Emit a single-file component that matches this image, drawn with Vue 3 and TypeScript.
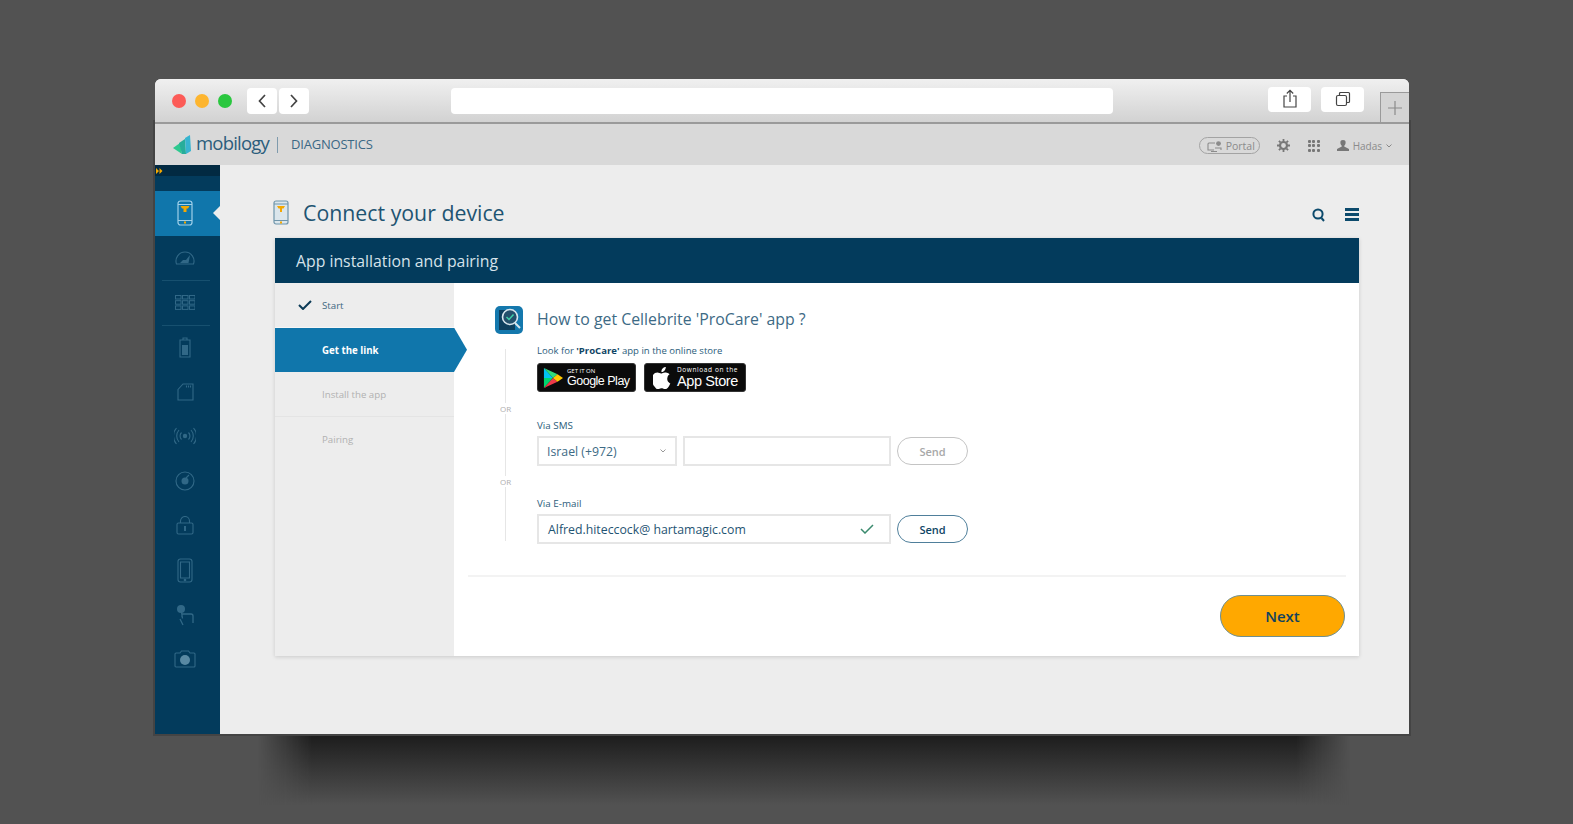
<script setup lang="ts">
interface Step {
  label: string
  state: 'done' | 'active' | 'todo'
}

const steps: Step[] = [
  { label: 'Start', state: 'done' },
  { label: 'Get the link', state: 'active' },
  { label: 'Install the app', state: 'todo' },
  { label: 'Pairing', state: 'todo' },
]
</script>

<template>
  <div class="stage">
    <div class="shadow"></div>
    <div class="edge"></div>
    <div class="window">
      <!-- browser chrome -->
      <div class="chrome">
        <div class="lights">
          <span class="light red"></span>
          <span class="light yellow"></span>
          <span class="light green"></span>
        </div>
        <div class="navs">
          <button class="chrome-btn nav">
            <svg width="10" height="16" viewBox="0 0 10 16"><path d="M8 2 2.5 8 8 14" fill="none" stroke="#444" stroke-width="1.7" /></svg>
          </button>
          <button class="chrome-btn nav">
            <svg width="10" height="16" viewBox="0 0 10 16"><path d="M2 2l5.5 6L2 14" fill="none" stroke="#444" stroke-width="1.7" /></svg>
          </button>
        </div>
        <div class="address"></div>
        <button class="chrome-btn tool share">
          <svg width="16" height="20" viewBox="0 0 16 20" fill="none" stroke="#444" stroke-width="1.2">
            <path d="M5 7H2v11h12V7h-3M8 13V1.5M4.8 4.5 8 1.3l3.2 3.2" />
          </svg>
        </button>
        <button class="chrome-btn tool tabs">
          <svg width="16" height="16" viewBox="0 0 16 16" fill="none" stroke="#444" stroke-width="1.2">
            <rect x="1.5" y="4.5" width="10" height="10" rx="1.5" />
            <path d="M4.5 4.5v-2a1 1 0 0 1 1-1h8a1 1 0 0 1 1 1v8a1 1 0 0 1-1 1h-2" />
          </svg>
        </button>
        <div class="new-tab">
          <svg width="14" height="14" viewBox="0 0 14 14"><path d="M7 0v14M0 7h14" stroke="#8a8a8a" stroke-width="1.2" /></svg>
        </div>
      </div>

      <!-- app header -->
      <header class="app-header">
        <svg class="logo-mark" width="19" height="20" viewBox="0 0 19 20">
          <path d="M0 13 7 8l2 11Z" fill="#2ec98f" />
          <path d="M6 8l6-4 1 15-4 0Z" fill="#27ad9a" />
          <path d="M12 3l5-3 1 16-5 3Z" fill="#37b4d0" />
        </svg>
        <span class="logo-text">mobilogy</span>
        <span class="logo-sep"></span>
        <span class="logo-sub">DIAGNOSTICS</span>
        <div class="header-right">
          <span class="portal">
            <svg width="16" height="12" viewBox="0 0 16 12" fill="none" stroke="#8b8b8b" stroke-width="1.1">
              <path d="M8 3H2a1 1 0 0 0-1 1v6h6M4 11.500h6" />
              <circle cx="11.5" cy="3.6" r="2.4" fill="#8b8b8b" stroke="none" />
              <path d="M8 8h6v2" />
            </svg>
            Portal
          </span>
          <svg class="gear" width="13" height="13" viewBox="0 0 13 13">
            <circle cx="6.5" cy="6.5" r="3.5" fill="none" stroke="#777" stroke-width="2.2" />
            <path d="M6.5 0v13M0 6.5h13M1.9 1.9l9.2 9.2M11.1 1.9l-9.2 9.2" stroke="#777" stroke-width="1.8" stroke-dasharray="2.2 8.6 2.2" />
          </svg>
          <div class="apps">
            <i v-for="n in 9" :key="n"></i>
          </div>
          <span class="user">
            <svg width="12" height="11" viewBox="0 0 12 11"><path d="M6 0a2.6 2.6 0 0 1 2.6 2.8c0 1.3-.7 2.4-1.4 2.9v.8L12 9v2H0V9l4.800-2.500v-.8C4.100 5.200 3.400 4.100 3.400 2.800A2.600 2.600 0 0 1 6 0Z" fill="#777" /></svg>
            Hadas
            <svg width="6" height="4" viewBox="0 0 6 4"><path d="M.5.500 3 3 5.500.5" fill="none" stroke="#888" stroke-width="1" /></svg>
          </span>
        </div>
      </header>

      <div class="body">
        <aside class="sidebar">
          <div class="side-top">
            <svg width="7" height="6" viewBox="0 0 7 6"><path d="M0 0l3 3-3 3ZM3.500 0l3 3-3 3Z" fill="#f5a800" /></svg>
          </div>
          <div class="side-item active">
            <svg width="16" height="26" viewBox="0 0 16 26" fill="none" stroke="#9fd0ea" stroke-width="1.200">
              <rect x="1" y="1" width="14" height="24" rx="2.500" />
              <path d="M1 4.500h14M1 20.500h14" />
              <path d="M3.500 6h9l-1.500 2.500H9.500V12h-3V8.500H5Z" fill="#f5a800" stroke="none" />
              <rect x="7" y="21.500" width="2" height="2" fill="#f5a800" stroke="none" />
            </svg>
          </div>
          <div class="side-item rule">
            <svg width="20" height="14" viewBox="0 0 20 14" fill="none" stroke="#3d7492" stroke-width="1.100">
              <path d="M1.500 13A9 9 0 1 1 18.500 13Z" />
              <path d="M5 12l3-3h3l4-5-1.500 8Z" fill="#3d7492" stroke="none" />
            </svg>
          </div>
          <div class="side-item rule">
            <svg width="20" height="15" viewBox="0 0 20 15" fill="none" stroke="#3d7492" stroke-width="1">
              <g v-for="r in 3" :key="r">
                <rect v-for="c in 3" :key="c" :x="0.5 + (c - 1) * 7" :y="0.5 + (r - 1) * 5.200" width="5.500" height="3.500" />
              </g>
            </svg>
          </div>
          <div class="side-item">
            <svg width="12" height="21" viewBox="0 0 12 21" fill="none" stroke="#3d7492" stroke-width="1.100">
              <path d="M4 3V1h4v2M1 3h10v17H1Z" />
              <rect x="3" y="8" width="6" height="10" fill="#3d7492" stroke="none" />
            </svg>
          </div>
          <div class="side-item">
            <svg width="17" height="18" viewBox="0 0 17 18" fill="none" stroke="#3d7492" stroke-width="1.100">
              <path d="M1 6.500 6 1h10v16H1Z" />
              <path d="M9.500 2.500v2M11.500 2.500v2M13.500 2.500v2" />
            </svg>
          </div>
          <div class="side-item">
            <svg width="22" height="18" viewBox="0 0 22 18" fill="none" stroke="#3d7492" stroke-width="1.100">
              <circle cx="11" cy="9" r="2.200" fill="#3d7492" stroke="none" />
              <path d="M7.500 5.500a5 5 0 0 0 0 7M14.500 5.500a5 5 0 0 1 0 7M5 3a9 9 0 0 0 0 12M17 3a9 9 0 0 1 0 12M2.500 1a12 12 0 0 0 0 16M19.500 1a12 12 0 0 1 0 16" />
            </svg>
          </div>
          <div class="side-item">
            <svg width="20" height="20" viewBox="0 0 20 20" fill="none" stroke="#3d7492" stroke-width="1.100">
              <circle cx="10" cy="10" r="9" />
              <circle cx="10" cy="10" r="3.500" fill="#3d7492" stroke="none" />
              <path d="M11 7l3-3" />
            </svg>
          </div>
          <div class="side-item">
            <svg width="18" height="19" viewBox="0 0 18 19" fill="none" stroke="#3d7492" stroke-width="1.100">
              <path d="M4.500 7V5a4.500 4.500 0 0 1 9 0v2" />
              <rect x="1" y="7" width="16" height="11" rx="1.500" />
              <path d="M9 10v5" stroke-width="2" />
            </svg>
          </div>
          <div class="side-item">
            <svg width="16" height="25" viewBox="0 0 16 25" fill="none" stroke="#3d7492" stroke-width="1.100">
              <rect x="1" y="1" width="14" height="23" rx="2.500" />
              <path d="M3.500 4h9v16h-9Z" />
              <circle cx="8" cy="22" r=".8" fill="#3d7492" />
            </svg>
          </div>
          <div class="side-item">
            <svg width="18" height="22" viewBox="0 0 18 22" fill="none" stroke="#3d7492" stroke-width="1.300">
              <circle cx="5" cy="5" r="4" fill="#3d7492" stroke="none" />
              <path d="M5 5l1.500 9.500M6 13V10h9a2 2 0 0 1 2 2v7M4 15l3 6" />
            </svg>
          </div>
          <div class="side-item">
            <svg width="22" height="18" viewBox="0 0 22 18" fill="none" stroke="#3d7492" stroke-width="1.100">
              <path d="M2 3h4l1.500-2h7L16 3h4a1 1 0 0 1 1 1v12a1 1 0 0 1-1 1H2a1 1 0 0 1-1-1V4a1 1 0 0 1 1-1Z" />
              <circle cx="11" cy="10" r="5" fill="#6f9db5" stroke="none" />
            </svg>
          </div>
        </aside>

        <main class="main">
          <div class="title-row">
            <svg class="title-icon" width="16" height="25" viewBox="0 0 16 25" fill="none" stroke="#6f95ab" stroke-width="1.200">
              <rect x="1" y="1" width="14" height="23" rx="2" fill="#dbe6ec" />
              <path d="M1 4h14M1 20.500h14" />
              <path d="M4 6h8l-1.500 2.500H9V12H7V8.500H5.500Z" fill="#f5a800" stroke="none" />
              <rect x="7" y="21.500" width="2" height="2" fill="#f5a800" stroke="none" />
            </svg>
            <h1>Connect your device</h1>
            <svg class="search" width="13" height="14" viewBox="0 0 13 14" fill="none" stroke="#0c4a6c" stroke-width="2">
              <circle cx="6" cy="6" r="4.600" />
              <path d="M9.500 10l2.500 3" />
            </svg>
            <div class="burger"><i></i><i></i><i></i></div>
          </div>

          <section class="card">
            <div class="card-head">App installation and pairing</div>
            <div class="card-body">
              <nav class="steps">
                <div v-for="s in steps" :key="s.label" class="step" :class="s.state">
                  <svg v-if="s.state === 'done'" class="check" width="14" height="10" viewBox="0 0 14 10"><path d="M1 5l4 4 8-8" fill="none" stroke="#0c3b57" stroke-width="2" /></svg>
                  {{ s.label }}
                </div>
              </nav>

              <div class="content">
                <div class="how">
                  <svg class="app-icon" width="28" height="28" viewBox="0 0 28 28">
                    <rect width="28" height="28" rx="5" fill="#1478ad" />
                    <rect x="4" y="4" width="16" height="20" fill="#0d3f5e" />
                    <circle cx="15" cy="11" r="7.500" fill="#24506c" stroke="#d9e6ee" stroke-width="1.600" />
                    <path d="M11.500 11l2.500 2.500 4.500-5" fill="none" stroke="#3fd0a8" stroke-width="1.500" />
                    <path d="M20 17l5 5" stroke="#d9e6ee" stroke-width="2" />
                  </svg>
                  <h2>How to get Cellebrite 'ProCare' app ?</h2>
                </div>

                <div class="options">
                  <div class="rail">
                    <span class="rail-line first"></span>
                    <span class="or">OR</span>
                    <span class="rail-line second"></span>
                    <span class="or">OR</span>
                    <span class="rail-line third"></span>
                  </div>
                  <div class="fields">
                    <p class="hint">Look for <b>'ProCare'</b> app in the online store</p>
                    <div class="stores">
                      <div class="badge play">
                        <svg width="20" height="22" viewBox="0 0 22 24">
                          <path d="M1 1v11h10Z" fill="#00c3f3" />
                          <path d="M1 23V12h10Z" fill="#00d66f" />
                          <path d="M1 1l15 7-5 4Z" fill="#2fdc7b" />
                          <path d="M1 23l15-7-5-4Z" fill="#ef3b49" />
                          <path d="M16 8l6 4-6 4-5-4Z" fill="#ffc900" />
                        </svg>
                        <div class="badge-text">
                          <small>GET IT ON</small>
                          <strong>Google Play</strong>
                        </div>
                      </div>
                      <div class="badge apple">
                        <svg width="19" height="22" viewBox="0 0 170 200">
                          <path fill="#fff" d="M150 67c-1 1-22 13-22 39 0 31 27 42 28 42 0 1-4 15-14 29-9 13-18 25-32 25s-18-8-34-8c-15 0-21 8-34 8s-22-12-32-26C-2 160-11 134-11 110c0-39 25-59 50-59 13 0 24 9 33 9 8 0 21-10 36-10 6 0 27 1 42 17ZM104 31c6-7 11-18 11-28 0-1 0-3-1-4-10 1-21 7-28 15-6 6-11 17-11 28 0 1 0 3 1 3s2 0 3 0c9 0 20-6 25-14Z" />
                        </svg>
                        <div class="badge-text">
                          <small class="apple-small">Download on the</small>
                          <strong class="apple-name">App Store</strong>
                        </div>
                      </div>
                    </div>

                    <label class="field-label sms">Via SMS</label>
                    <div class="field-row">
                      <div class="box country">
                        Israel (+972)
                        <svg width="6" height="4" viewBox="0 0 6 4"><path d="M.5.500 3 3 5.500.5" fill="none" stroke="#999" stroke-width="1" /></svg>
                      </div>
                      <div class="box phone"></div>
                      <button class="send off">Send</button>
                    </div>

                    <label class="field-label mail">Via E-mail</label>
                    <div class="field-row">
                      <div class="box email">
                        Alfred.hiteccock@ hartamagic.com
                        <svg width="14" height="10" viewBox="0 0 14 10"><path d="M1 5l4 4 8-8" fill="none" stroke="#3b8a6e" stroke-width="1.500" /></svg>
                      </div>
                      <button class="send on">Send</button>
                    </div>
                  </div>
                </div>

                <div class="footer">
                  <button class="next">Next</button>
                </div>
              </div>
            </div>
          </section>
        </main>
      </div>
    </div>
  </div>
</template>

<style>
html,
body {
  margin: 0;
  background: #525252;
}
</style>

<style scoped>
.stage {
  position: relative;
  width: 1573px;
  height: 824px;
  padding: 79px 0 0 155px;
  box-sizing: border-box;
  overflow: hidden;
  background: #525252;
  font-family: "Open Sans", "Liberation Sans", sans-serif;
}

.shadow {
  position: absolute;
  left: 258px;
  top: 733px;
  width: 1092px;
  height: 72px;
  background: linear-gradient(#1b1b1b, #525252);
  -webkit-mask-image: linear-gradient(90deg, transparent, #000 5%, #000 95%, transparent);
  mask-image: linear-gradient(90deg, transparent, #000 5%, #000 95%, transparent);
}

.edge {
  position: absolute;
  left: 153px;
  top: 120px;
  width: 1258px;
  height: 616px;
  background: #444444;
}

.window {
  position: relative;
  width: 1254px;
  height: 655px;
  display: flex;
  flex-direction: column;
  border-radius: 6px 6px 0 0;
  overflow: hidden;
  background: #ededed;
}

button {
  font-family: inherit;
  border: none;
  padding: 0;
}

.chrome {
  height: 45px;
  flex: none;
  display: flex;
  align-items: center;
  box-sizing: border-box;
  border-bottom: 2px solid #9a9a9a;
  background: linear-gradient(#f0f0f0, #d2d2d2);
  position: relative;
}

.lights {
  display: flex;
  gap: 9px;
  margin-left: 17px;
}

.light {
  width: 14px;
  height: 14px;
  border-radius: 50%;
}

.red { background: #fc5b57; }
.yellow { background: #fdb52f; }
.green { background: #2ac73f; }

.navs {
  display: flex;
  gap: 2px;
  margin-left: 15px;
}

.chrome-btn {
  display: flex;
  align-items: center;
  justify-content: center;
  background: #fff;
  border-radius: 4px;
  height: 26px;
}

.nav { width: 30px; }

.address {
  width: 662px;
  height: 26px;
  margin-left: 142px;
  background: #fff;
  border-radius: 4px;
}

.tool {
  width: 43px;
  height: 25px;
  margin-top: -3px;
}

.share { margin-left: 155px; }
.tabs { margin-left: 10px; }

.new-tab {
  position: absolute;
  right: 0;
  bottom: 0;
  width: 29px;
  height: 30px;
  box-sizing: border-box;
  border: 1px solid #9a9a9a;
  border-right: none;
  border-bottom: none;
  background: #d4d4d4;
  display: flex;
  align-items: center;
  justify-content: center;
}

.app-header {
  height: 41px;
  flex: none;
  display: flex;
  align-items: center;
  padding: 0 18px;
  background: #d9d9d9;
  color: #2c5d7b;
}

.logo-mark { margin-right: 4px; }

.logo-text {
  font-size: 18.500px;
  letter-spacing: -0.8px;
  color: #2b5d7c;
  margin-top: -4px;
}

.logo-sep {
  width: 1px;
  height: 16px;
  background: #7f9bad;
  margin: 0 13px 0 8px;
}

.logo-sub {
  font-size: 13px;
  font-weight: 500;
  letter-spacing: -0.2px;
  color: #3b6885;
  margin-top: -1px;
}

.header-right {
  margin-left: auto;
  margin-top: 2px;
  display: flex;
  align-items: center;
  color: #8b8b8b;
  font-size: 10.500px;
}

.portal {
  display: flex;
  align-items: center;
  gap: 3px;
  height: 17px;
  width: 61px;
  padding-left: 7px;
  box-sizing: border-box;
  border: 1.500px solid #a3a3a3;
  border-radius: 10px;
}

.gear { margin-left: 17px; }

.apps {
  display: grid;
  grid-template-columns: repeat(3, 3px);
  gap: 1.500px;
  margin-left: 18px;
}

.apps i {
  width: 3px;
  height: 3px;
  background: #777;
  border-radius: 1px;
}

.user {
  display: flex;
  align-items: center;
  gap: 4px;
  margin-left: 17px;
  margin-right: -1px;
  color: #8b8b8b;
  font-size: 10px;
}

.body {
  flex: 1;
  display: flex;
  min-height: 0;
}

.sidebar {
  width: 65px;
  flex: none;
  background: #033b5c;
  display: flex;
  flex-direction: column;
}

.side-top {
  height: 11px;
  margin-bottom: 15px;
  background: #022a42;
  display: flex;
  align-items: center;
  padding-left: 1px;
}

.side-item {
  height: 44.600px;
  flex: none;
  box-sizing: border-box;
  padding-right: 5px;
  display: flex;
  align-items: center;
  justify-content: center;
  position: relative;
}

.side-item:not(.active) svg {
  opacity: 0.8;
}

.side-item.active {
  background: #1076ab;
}

.side-item.active::after {
  content: "";
  position: absolute;
  right: 0;
  top: 15px;
  border: 7px solid transparent;
  border-left: none;
  border-right-color: #ededed;
}

.side-item.rule:not(.active)::after {
  content: "";
  position: absolute;
  left: 7px;
  right: 10px;
  bottom: -1px;
  height: 1px;
  background: #17506f;
}

.main {
  flex: 1;
  min-width: 0;
  padding: 0 50px 0 55px;
}

.title-row {
  height: 73px;
  display: flex;
  align-items: center;
  padding-top: 21px;
  box-sizing: border-box;
}

.title-icon { margin-right: 14px; margin-left: -2px; }

h1 {
  margin: 0;
  font-size: 21.300px;
  font-weight: 400;
  color: #1e5472;
}

.search { margin-left: auto; margin-top: 5px; }

.burger {
  display: flex;
  flex-direction: column;
  gap: 2.500px;
  margin-left: 20px;
  margin-top: 5px;
}

.burger i {
  width: 14px;
  height: 2.500px;
  background: #0c4a6c;
}

.card {
  background: #fff;
  box-shadow: 0 1px 4px rgba(0, 0, 0, 0.15);
}

.card-head {
  height: 45px;
  box-sizing: border-box;
  padding-left: 21px;
  display: flex;
  align-items: center;
  background: #033b5c;
  color: #d5e2ea;
  font-size: 15.800px;
}

.card-body {
  display: flex;
  height: 373px;
}

.steps {
  width: 179px;
  flex: none;
  background: #ededed;
  font-size: 9.700px;
  position: relative;
}

.step {
  height: 44.500px;
  box-sizing: border-box;
  display: flex;
  align-items: center;
  padding: 1px 0 0 47px;
  position: relative;
  color: #3d6781;
}

.step.todo {
  color: #b1b1b1;
}

.step.todo:nth-child(3) {
  border-bottom: 1px solid #e4e4e4;
}

.step.done {
  border-bottom: 1px solid #f6f6f6;
}

.check {
  position: absolute;
  left: 23px;
  top: 17px;
}

.step.active {
  width: 192px;
  margin-right: -13px;
  background: #1076ab;
  color: #fff;
  font-weight: 700;
  clip-path: polygon(0 0, 179px 0, 100% 50%, 179px 100%, 0 100%);
}

.content {
  flex: 1;
  min-width: 0;
  padding: 0 13px 0 41px;
  display: flex;
  flex-direction: column;
}

.how {
  display: flex;
  align-items: center;
  gap: 14px;
  margin-top: 23px;
  height: 28px;
}

h2 {
  margin: -3px 0 0;
  font-size: 15.850px;
  font-weight: 400;
  color: #3d6a85;
}

.options {
  display: flex;
  margin-top: 9px;
  height: 198px;
}

.rail {
  width: 42px;
  display: flex;
  flex-direction: column;
  align-items: center;
  flex: none;
  box-sizing: border-box;
  padding: 6px 21px 0 0;
  color: #aeaeae;
  font-size: 8px;
}

.rail-line {
  width: 1px;
  background: #e6e6e6;
}

.rail-line.first { height: 54px; }
.rail-line.second { height: 62px; }
.rail-line.third { height: 54px; }
.or { line-height: 11px; }

.fields {
  flex: 1;
  min-width: 0;
}

.hint {
  margin: 1px 0 0;
  font-size: 9.550px;
  line-height: 14px;
  color: #2c5d7b;
}

.hint b { color: #0f4565; }

.stores {
  display: flex;
  gap: 8px;
  margin-top: 5px;
}

.badge {
  height: 29px;
  box-sizing: border-box;
  border-radius: 3px;
  background: #0b0b0b;
  border: 1px solid #333;
  display: flex;
  align-items: center;
  color: #fff;
}

.play { width: 99px; padding-left: 5px; gap: 4px; }
.apple { width: 102px; padding-left: 8px; gap: 5px; }

.badge-text {
  display: flex;
  flex-direction: column;
  line-height: 1;
}

.badge-text small {
  font-size: 6px;
  margin-bottom: 1px;
}

.badge-text small.apple-small {
  font-size: 6.500px;
  letter-spacing: 0.6px;
  white-space: nowrap;
}

.badge-text strong {
  font-family: "Liberation Sans", sans-serif;
  font-weight: 400;
  font-size: 12.500px;
  letter-spacing: -0.5px;
  white-space: nowrap;
}

.badge-text strong.apple-name {
  font-size: 14.500px;
  letter-spacing: -0.4px;
}

.field-label {
  display: block;
  font-size: 9.800px;
  line-height: 14px;
  color: #2c5d7b;
}

.field-label.sms { margin-top: 27px; }
.field-label.mail { margin-top: 31px; }

.field-row {
  display: flex;
  align-items: center;
  margin-top: 3px;
}

.box {
  height: 30px;
  box-sizing: border-box;
  border: 2px solid #e6e6e6;
  display: flex;
  align-items: center;
  color: #3d6a85;
  font-size: 12.300px;
}

.country {
  width: 140px;
  padding: 0 9px 0 8px;
  justify-content: space-between;
}

.phone {
  width: 208px;
  margin-left: 6px;
}

.email {
  width: 354px;
  padding: 0 15px 0 9px;
  justify-content: space-between;
  color: #1f5473;
}

.send {
  width: 71px;
  height: 28px;
  margin-left: 6px;
  border-radius: 14px;
  background: #fff;
  font-size: 11px;
  font-weight: 600;
  box-sizing: border-box;
}

.send.off {
  border: 1.500px solid #c4c4c4;
  color: #a8a8a8;
}

.send.on {
  border: 1.500px solid #4f7f9b;
  color: #0f4565;
}

.footer {
  margin: 34px 0 0 -27px;
  padding-top: 18px;
  border-top: 2px solid #f3f3f3;
  display: flex;
  justify-content: flex-end;
}

.next {
  width: 125px;
  height: 42px;
  margin-right: 1px;
  border-radius: 21px;
  background: #ffa800;
  border: 1.500px solid #6f8f8f;
  color: #11425f;
  font-size: 15px;
  font-weight: 600;
}
</style>
